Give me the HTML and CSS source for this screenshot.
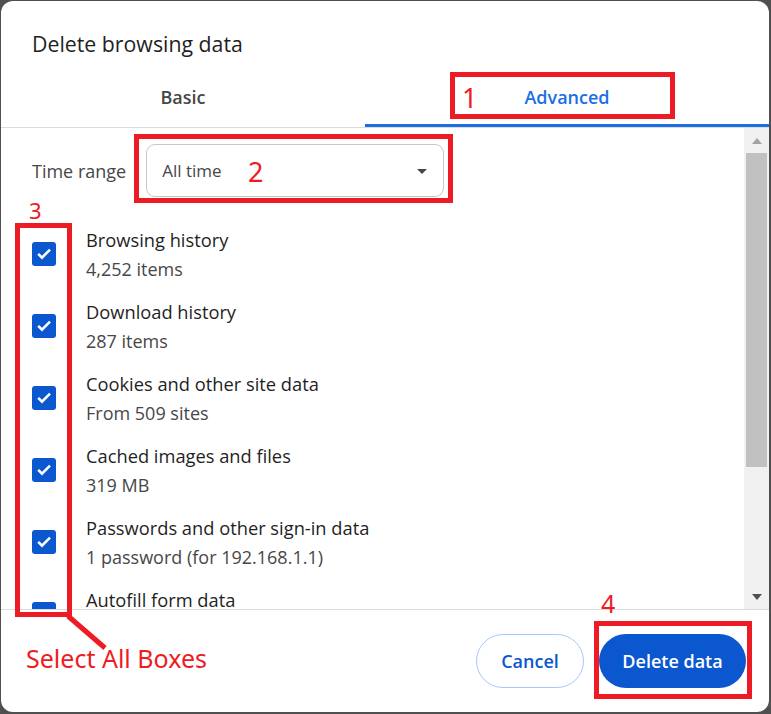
FILE: index.html
```html
<!DOCTYPE html>
<html>
<head>
<meta charset="utf-8">
<link rel="stylesheet" href="styles.css">
</head>
<body>
<div class="dialog">
  <div class="header">Delete browsing data</div>
  <div class="tabs">
    <div class="tab">Basic</div>
    <div class="tab active">Advanced</div>
  </div>
  <div class="scroll">
    <div class="content">
      <div class="range">
        <span class="range-label">Time range</span>
        <div class="select">
          <span>All time</span>
          <svg class="caret" width="10" height="5" viewBox="0 0 10 5"><path d="M0 0h10L5 5z" fill="#474747"/></svg>
        </div>
      </div>
      <div class="row">
        <span class="check"><svg width="24" height="24" viewBox="0 0 24 24"><path d="M6.2 11.8l3.8 3.8 8-8" fill="none" stroke="#fff" stroke-width="2.6"/></svg></span>
        <div class="text"><div class="title">Browsing history</div><div class="sub">4,252 items</div></div>
      </div>
      <div class="row">
        <span class="check"><svg width="24" height="24" viewBox="0 0 24 24"><path d="M6.2 11.8l3.8 3.8 8-8" fill="none" stroke="#fff" stroke-width="2.6"/></svg></span>
        <div class="text"><div class="title">Download history</div><div class="sub">287 items</div></div>
      </div>
      <div class="row">
        <span class="check"><svg width="24" height="24" viewBox="0 0 24 24"><path d="M6.2 11.8l3.8 3.8 8-8" fill="none" stroke="#fff" stroke-width="2.6"/></svg></span>
        <div class="text"><div class="title">Cookies and other site data</div><div class="sub">From 509 sites</div></div>
      </div>
      <div class="row">
        <span class="check"><svg width="24" height="24" viewBox="0 0 24 24"><path d="M6.2 11.8l3.8 3.8 8-8" fill="none" stroke="#fff" stroke-width="2.6"/></svg></span>
        <div class="text"><div class="title">Cached images and files</div><div class="sub">319 MB</div></div>
      </div>
      <div class="row">
        <span class="check"><svg width="24" height="24" viewBox="0 0 24 24"><path d="M6.2 11.8l3.8 3.8 8-8" fill="none" stroke="#fff" stroke-width="2.6"/></svg></span>
        <div class="text"><div class="title">Passwords and other sign-in data</div><div class="sub">1 password (for 192.168.1.1)</div></div>
      </div>
      <div class="row">
        <span class="check"><svg width="24" height="24" viewBox="0 0 24 24"><path d="M6.2 11.8l3.8 3.8 8-8" fill="none" stroke="#fff" stroke-width="2.6"/></svg></span>
        <div class="text"><div class="title">Autofill form data</div></div>
      </div>
    </div>
    <div class="scrollbar">
      <div class="arrow"><svg width="10" height="6" viewBox="0 0 10 6"><path d="M0 6L5 0l5 6z" fill="#a3a3a3"/></svg></div>
      <div class="thumb-track"><div class="thumb"></div></div>
      <div class="arrow"><svg width="10" height="6" viewBox="0 0 10 6"><path d="M0 0h10L5 6z" fill="#505050"/></svg></div>
    </div>
  </div>
  <div class="footer">
    <button class="btn cancel">Cancel</button>
    <button class="btn primary">Delete data</button>
  </div>
</div>

<div class="anno box1"></div>
<div class="anno-num n1">1</div>
<div class="anno box2"></div>
<div class="anno-num n2">2</div>
<div class="anno box3"></div>
<div class="anno-num n3">3</div>
<div class="anno box4"></div>
<div class="anno-num n4">4</div>
<svg class="anno-line" width="771" height="714" viewBox="0 0 771 714"><line x1="68" y1="616" x2="105" y2="648" stroke="#ed1c24" stroke-width="5"/></svg>
<div class="anno-text">Select All Boxes</div>
</body>
</html>
```
FILE: styles.css
```css
* { box-sizing: border-box; }
html, body { margin: 0; padding: 0; }
body {
  width: 771px;
  height: 714px;
  background: #505050;
  position: relative;
  overflow: hidden;
  font-family: "Open Sans", "Noto Sans", sans-serif;
  padding: 1px 2px 2px 1px;
}
.dialog {
  width: 768px;
  height: 711px;
  background: #fff;
  border-radius: 12px;
  display: flex;
  flex-direction: column;
  overflow: hidden;
}
.header {
  height: 70px;
  padding: 30px 0 0 31px;
  font-size: 21.3px;
  color: #1f1f1f;
  line-height: 26px;
}
.tabs {
  display: flex;
  border-bottom: 1px solid #dcdcdc;
  height: 57px;
}
.tab {
  height: 56px;
  display: flex;
  align-items: center;
  justify-content: center;
  font-size: 18px;
  font-weight: 600;
  color: #474747;
  border-bottom: 3px solid transparent;
  padding-bottom: 2px;
}
.tab:first-child { width: 364px; }
.tab.active { flex: 1; color: #1b6fe3; border-bottom-color: #1b6fe3; }
.scroll {
  height: 482px;
  display: flex;
  border-bottom: 1px solid #dcdcdc;
  overflow: hidden;
}
.content {
  flex: 1;
  padding: 16px 0 0 0;
}
.range {
  display: flex;
  align-items: center;
  padding-left: 31px;
  gap: 20px;
  height: 53px;
}
.range-label { font-size: 18px; color: #474747; }
.select {
  width: 298px;
  height: 53px;
  border: 1px solid #c7c7c7;
  border-radius: 9px;
  display: flex;
  align-items: center;
  justify-content: space-between;
  padding: 0 16px 0 15px;
  font-size: 17px;
  color: #474747;
}
.caret { margin-top: 1px; }
.row {
  height: 72px;
  display: flex;
  align-items: flex-start;
  padding-left: 31px;
}
.range + .row { margin-top: 22px; }
.check {
  width: 24px;
  height: 24px;
  margin-top: 23px;
  background: #0b57d0;
  border-radius: 3px;
  display: flex;
  flex-shrink: 0;
}
.text { margin-left: 30px; padding-top: 11px; }
.title { font-size: 18.3px; line-height: 19px; color: #1f1f1f; }
.sub { font-size: 18px; line-height: 19px; margin-top: 11px; color: #474747; }
.scrollbar {
  width: 25px;
  background: #f1f1f1;
  display: flex;
  flex-direction: column;
  padding-right: 2px;
}
.arrow {
  height: 25px;
  display: flex;
  align-items: center;
  justify-content: center;
  padding-left: 2px;
}
.thumb-track { flex: 1; padding-left: 2px; }
.thumb { height: 314px; background: #c1c1c1; }
.footer {
  flex: 1;
  display: flex;
  justify-content: flex-end;
  align-items: center;
  gap: 15px;
  padding: 0 23px 0 0;
}
.btn {
  font-family: inherit;
  height: 54px;
  border-radius: 27px;
  font-size: 18px;
  font-weight: 600;
  cursor: pointer;
  padding: 0;
}
.cancel {
  width: 108px;
  background: #fff;
  border: 1px solid #a8c7fa;
  color: #0b57d0;
}
.primary {
  width: 147px;
  background: #0b57d0;
  border: none;
  color: #fff;
}
.anno {
  position: absolute;
  border: 5px solid #ed1c24;
}
.box1 { left: 450px; top: 72px; width: 225px; height: 47px; }
.box2 { left: 134px; top: 134px; width: 319px; height: 69px; }
.box3 { left: 15px; top: 223px; width: 57px; height: 394px; }
.box4 { left: 594px; top: 621px; width: 158px; height: 78px; }
.anno-num {
  position: absolute;
  color: #ed1c24;
  font-size: 27px;
  line-height: 1;
  font-family: "Noto Sans", sans-serif;
}
.n1 { left: 462px; top: 84px; }
.n2 { left: 248px; top: 158px; }
.n3 { left: 29px; top: 199px; font-size: 22px; }
.n4 { left: 601px; top: 591px; font-size: 25px; }
.anno-line { position: absolute; left: 0; top: 0; pointer-events: none; }
.anno-text {
  position: absolute;
  left: 26px;
  top: 643px;
  color: #ed1c24;
  font-size: 25px;
  line-height: 30px;
  font-family: "Noto Sans", sans-serif;
}
```
